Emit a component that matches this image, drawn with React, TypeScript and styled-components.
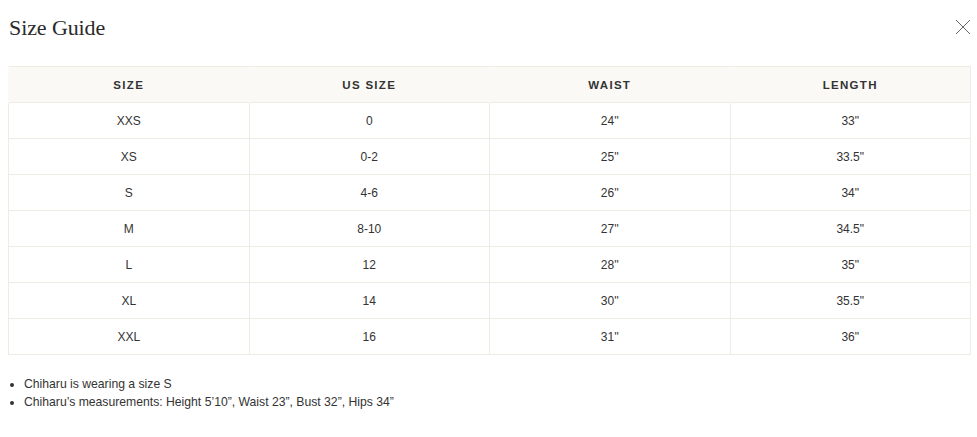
import React from "react";
import styled, { createGlobalStyle } from "styled-components";

const Global = createGlobalStyle`
  html, body { margin: 0; padding: 0; background: #fff; }
  body { font-family: "Liberation Sans", Arial, sans-serif; color: #333; }
`;

const Modal = styled.div`
  width: 977px;
  box-sizing: border-box;
  padding: 0 6px 0 8px;
`;

const Header = styled.div`
  display: flex;
  align-items: center;
  justify-content: space-between;
  height: 56px;
  margin-bottom: 10px;
`;

const Title = styled.h2`
  margin: 0 0 0 1px;
  font-family: "Liberation Serif", "Times New Roman", serif;
  font-weight: 400;
  font-size: 22px;
  color: #2a2a2a;
  letter-spacing: -0.1px;
  line-height: 1;
`;

const CloseButton = styled.button`
  border: 0;
  background: none;
  padding: 0;
  margin: 0 0 2px 0;
  width: 16px;
  height: 16px;
  display: flex;
  align-items: center;
  justify-content: center;
  cursor: pointer;
`;

const Table = styled.table`
  width: 963px;
  border-collapse: collapse;
  table-layout: fixed;
  border: 1px solid #efede3;
`;

const HeadCell = styled.th`
  height: 35px;
  padding: 0;
  background: #faf9f5;
  font-family: "Liberation Sans", Arial, sans-serif;
  font-weight: 700;
  font-size: 11.5px;
  letter-spacing: 1.3px;
  color: #333;
  text-align: center;
  border-left: 1px solid #faf9f5;
`;

const Cell = styled.td`
  height: 35px;
  padding: 0;
  text-align: center;
  font-size: 12px;
  color: #333;
  border: 1px solid #efede3;
`;

const Notes = styled.ul`
  margin: 20px 0 0 0;
  padding-left: 16px;
  font-family: "Liberation Sans", Arial, sans-serif;
  font-size: 12.2px;
  line-height: 18px;
  color: #333;
`;

const rows = [
  ["XXS", "0", "24''", '33"'],
  ["XS", "0-2", "25''", '33.5"'],
  ["S", "4-6", "26''", '34"'],
  ["M", "8-10", "27''", '34.5"'],
  ["L", "12", "28''", '35"'],
  ["XL", "14", "30''", '35.5"'],
  ["XXL", "16", "31''", '36"'],
];

export default function App() {
  return (
    <>
      <Global />
      <Modal>
        <Header>
          <Title>Size Guide</Title>
          <CloseButton aria-label="Close">
            <svg width="16" height="16" viewBox="0 0 16 16">
              <path d="M1 1 L15 15 M15 1 L1 15" stroke="#666" strokeWidth="1" fill="none" />
            </svg>
          </CloseButton>
        </Header>
        <Table>
          <thead>
            <tr>
              <HeadCell>SIZE</HeadCell>
              <HeadCell>US SIZE</HeadCell>
              <HeadCell>WAIST</HeadCell>
              <HeadCell>LENGTH</HeadCell>
            </tr>
          </thead>
          <tbody>
            {rows.map((r) => (
              <tr key={r[0]}>
                {r.map((c, i) => (
                  <Cell key={i}>{c}</Cell>
                ))}
              </tr>
            ))}
          </tbody>
        </Table>
        <Notes>
          <li>Chiharu is wearing a size S</li>
          <li>Chiharu’s measurements: Height 5’10”, Waist 23”, Bust 32”, Hips 34”</li>
        </Notes>
      </Modal>
    </>
  );
}
